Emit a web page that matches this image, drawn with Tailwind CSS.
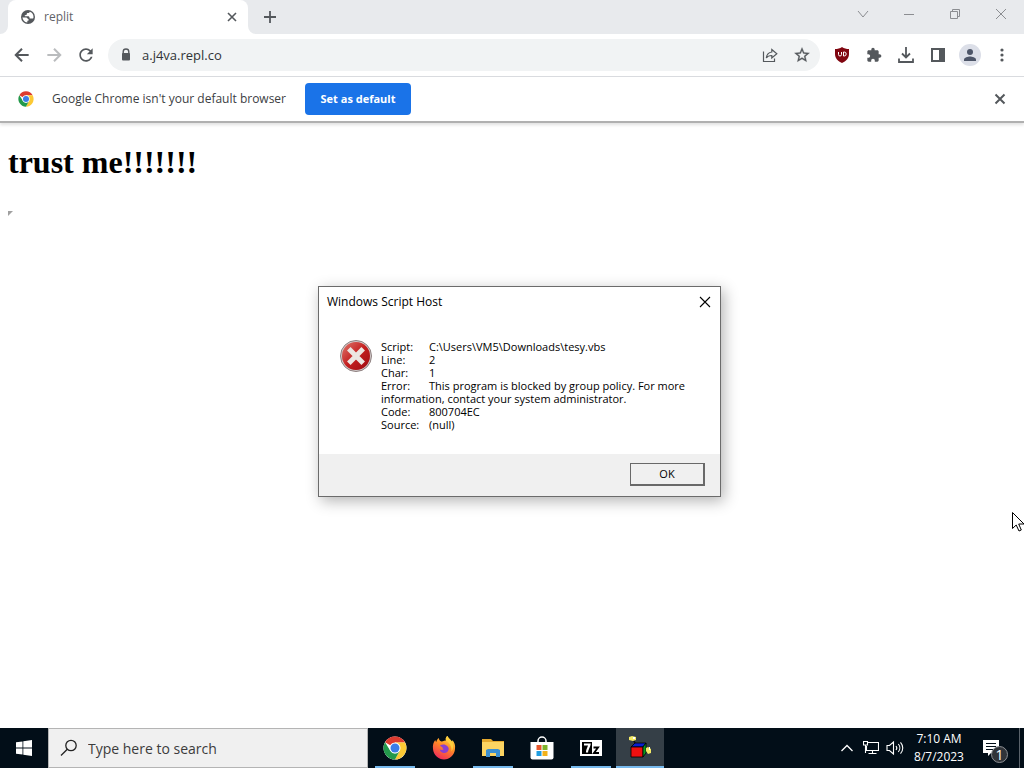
<!DOCTYPE html>
<html lang="en">
<head>
    <meta charset="UTF-8">
    <meta name="viewport" content="width=device-width, initial-scale=1.0">
    <title>replit</title>
    <script src="https://cdn.jsdelivr.net/npm/@tailwindcss/browser@4"></script>
</head>
<body class="relative flex min-h-screen flex-col overflow-x-hidden bg-white font-['Open_Sans','Noto_Sans',sans-serif] text-[#3c4043]">

    <!-- Shared Chrome logo -->
    <svg class="hidden">
        <symbol id="chrome" viewBox="0 0 48 48">
            <circle cx="24" cy="24" r="23" fill="#fff"/>
            <path fill="#dd3b2f" d="M24 24 4 12.500A23 23 0 0 1 44 12.500L44 13H24z"/>
            <path fill="#fcc934" d="M24 13h20a23 23 0 0 1-20 34l9.500-17.500z"/>
            <path fill="#23994b" d="M4.100 12.500 14.500 29.500 24 35l9.500-5.500L24 47A23 23 0 0 1 4.100 12.500z"/>
            <circle cx="24" cy="24" r="11" fill="#fff"/>
            <circle cx="24" cy="24" r="9" fill="#3a7de8"/>
        </symbol>
    </svg>

    <!-- Tab Strip -->
    <header class="flex h-[34px] bg-[#e8eaed] pl-2">
        <div class="relative flex w-60 items-center rounded-t-lg bg-white px-3">
            <svg class="absolute -left-2 bottom-0 size-2" viewBox="0 0 8 8"><path fill="#fff" d="M8 0v8H0a8 8 0 0 0 8-8z"/></svg>
            <svg class="absolute -right-2 bottom-0 size-2" viewBox="0 0 8 8"><path fill="#fff" d="M0 0v8h8a8 8 0 0 1-8-8z"/></svg>
            <svg class="size-4" viewBox="0 0 16 16">
                <circle cx="8" cy="8" r="7" fill="#54585c"/>
                <path fill="#fff" d="M9.800 2.700c-.3.900-.8 1.300-1.900 1.300-1 0-1.200.6-1.200 1.300 0 .8-.7.900-1.400.9-.6 0-.8.6-.3 1.100h3c1 0 1.500.6 1.500 1.400 0 .7.5.9 1.200.9h2.400c.3-.5.4-1 .4-1.600A5.600 5.600 0 0 0 9.800 2.700zM2.500 8.200a5.600 5.600 0 0 0 4.800 5.200v-1c0-.6.300-.8.900-.9.600-.1.800-.6.400-1.100L7.300 9.200c-.5-.5-1-.6-1.700-.6-.8 0-2.500 0-3.100-.4z"/>
            </svg>
            <span class="ml-2 flex-1 text-xs text-[#5f6368]">replit</span>
            <button class="-mr-1 flex size-4 items-center justify-center" aria-label="Close tab">
                <svg class="size-4" viewBox="0 0 16 16" fill="none" stroke="#54585c" stroke-width="1.600"><path d="M4 4l8 8M12 4l-8 8"/></svg>
            </button>
        </div>
        <button class="ml-2 flex w-7 items-center justify-center" aria-label="New tab">
            <svg class="size-4" viewBox="0 0 16 16" fill="none" stroke="#54585c" stroke-width="1.800"><path d="M8 2v12M2 8h12"/></svg>
        </button>
        <div class="ml-auto flex h-7 text-[#8b8d91]">
            <button class="flex w-[46px] items-center justify-center" aria-label="Search tabs">
                <svg class="size-3" viewBox="0 0 12 12" fill="none" stroke="currentColor"><path d="M1 3l5 6 5-6"/></svg>
            </button>
            <button class="flex w-[46px] items-center justify-center" aria-label="Minimize">
                <svg class="size-3" viewBox="0 0 12 12" fill="none" stroke="currentColor"><path d="M1 6.500h10"/></svg>
            </button>
            <button class="flex w-[46px] items-center justify-center" aria-label="Restore">
                <svg class="size-3" viewBox="0 0 12 12" fill="none" stroke="currentColor"><path d="M1.500 3.500h7v7h-7zM3.500 3.500v-2h7v7h-2"/></svg>
            </button>
            <button class="flex w-[46px] items-center justify-center" aria-label="Close">
                <svg class="size-3" viewBox="0 0 12 12" fill="none" stroke="currentColor"><path d="M1 1l10 10M11 1L1 11"/></svg>
            </button>
        </div>
    </header>

    <!-- Toolbar -->
    <nav class="flex h-[43px] items-center border-b border-[#dadce0] px-[6px] text-[#54585c]">
        <button class="flex size-8 items-center justify-center" aria-label="Back">
            <svg class="size-5" viewBox="0 0 24 24" fill="none" stroke="currentColor" stroke-width="2.400"><path d="M20 12H5M12 4.500L4.500 12l7.500 7.500"/></svg>
        </button>
        <button class="flex size-8 items-center justify-center text-[#babcbe]" aria-label="Forward">
            <svg class="size-5" viewBox="0 0 24 24" fill="none" stroke="currentColor" stroke-width="2.400"><path d="M4 12h15M12 4.500l7.500 7.500-7.500 7.500"/></svg>
        </button>
        <button class="flex size-8 items-center justify-center" aria-label="Reload">
            <svg class="size-5" viewBox="0 0 24 24" fill="currentColor"><path d="M17.650 6.350C16.200 4.900 14.210 4 12 4c-4.420 0-7.990 3.580-7.990 8s3.570 8 7.990 8c3.730 0 6.840-2.550 7.730-6h-2.080c-.82 2.330-3.040 4-5.650 4-3.310 0-6-2.690-6-6s2.690-6 6-6c1.660 0 3.140.69 4.220 1.780L13 11h7V4l-2.350 2.350z"/></svg>
        </button>
        <div class="mx-[6px] flex h-8 flex-1 items-center rounded-full bg-[#f1f3f4] pr-[2px] pl-[10px]">
            <svg class="size-4" viewBox="0 0 16 16"><path fill="none" stroke="#54585c" stroke-width="1.400" d="M5.200 7V4.800a2.800 2.800 0 0 1 5.600 0V7"/><rect x="4" y="6" width="8" height="7.500" rx="1" fill="#54585c"/></svg>
            <input type="text" value="a.j4va.repl.co" aria-label="Address" class="ml-2 min-w-0 flex-1 bg-transparent pt-px text-[13px] text-[#303337] outline-none">
            <button class="flex size-8 items-center justify-center" aria-label="Share">
                <svg class="size-4" viewBox="0 0 16 16" fill="none" stroke="currentColor" stroke-width="1.200"><path d="M1.500 4.500v10h11v-3M9.800 2.500l5 4.200-5 4.200V8.500c-2.600 0-4.300.7-5.500 2.500.4-3.500 2.300-5.500 5.500-6z"/></svg>
            </button>
            <button class="flex size-8 items-center justify-center" aria-label="Bookmark">
                <svg class="size-[18px]" viewBox="0 0 24 24" fill="currentColor" stroke="currentColor" stroke-width=".4"><path d="M22 9.240l-7.190-.62L12 2 9.190 8.630 2 9.240l5.460 4.730L5.820 21 12 17.270 18.180 21l-1.630-7.030L22 9.240zM12 15.400l-3.760 2.270 1-4.280-3.320-2.880 4.380-.38L12 6.100l1.710 4.040 4.380.38-3.320 2.880 1 4.280L12 15.400z"/></svg>
            </button>
        </div>
        <button class="flex size-8 items-center justify-center" aria-label="uBlock Origin">
            <svg class="size-4" viewBox="0 0 16 16"><path fill="#800610" d="M8 0c2 1.500 4.500 2 7 2v5c0 4.500-3 7-7 9-4-2-7-4.500-7-9V2c2.500 0 5-.5 7-2z"/><path fill="none" stroke="#fff" d="M4.500 5v2.500a1.500 1.500 0 0 0 3 0V5M9.500 5v4h.7a2 2 0 0 0 0-4z"/></svg>
        </button>
        <button class="flex size-8 items-center justify-center" aria-label="Extensions">
            <svg class="size-4" viewBox="0 0 24 24" fill="currentColor"><path d="M20.500 11H19V7c0-1.100-.9-2-2-2h-4V3.500C13 2.120 11.880 1 10.500 1S8 2.120 8 3.500V5H4c-1.100 0-1.990.9-1.990 2v3.800H3.500c1.490 0 2.700 1.210 2.700 2.700s-1.210 2.700-2.700 2.700H2V20c0 1.100.9 2 2 2h3.800v-1.500c0-1.490 1.210-2.700 2.700-2.700 1.490 0 2.700 1.210 2.700 2.700V22H17c1.100 0 2-.9 2-2v-4h1.500c1.380 0 2.500-1.120 2.500-2.500S21.880 11 20.500 11z"/></svg>
        </button>
        <button class="flex size-8 items-center justify-center" aria-label="Downloads">
            <svg class="size-4" viewBox="0 0 16 16" fill="none" stroke="currentColor" stroke-width="1.800"><path d="M8 0v10M4 6.500l4 4 4-4M1 11.500V15h14v-3.500"/></svg>
        </button>
        <button class="flex size-8 items-center justify-center" aria-label="Side panel">
            <svg class="size-4" viewBox="0 0 16 16" fill="currentColor"><path fill-rule="evenodd" d="M1 1h14v14H1zM3 3v10h6V3z"/></svg>
        </button>
        <button class="flex size-8 items-center justify-center" aria-label="Profile">
            <svg class="size-[22px]" viewBox="0 0 22 22"><circle cx="11" cy="11" r="11" fill="#dcdfe8"/><circle cx="11" cy="8" r="3" fill="#4d5568"/><path fill="#4d5568" d="M5 17v-1.500c0-2 4-3 6-3s6 1 6 3V17z"/></svg>
        </button>
        <button class="flex size-8 items-center justify-center" aria-label="Menu">
            <svg class="size-4" viewBox="0 0 16 16" fill="currentColor"><circle cx="8" cy="3" r="1.600"/><circle cx="8" cy="8" r="1.600"/><circle cx="8" cy="13" r="1.600"/></svg>
        </button>
    </nav>

    <!-- Default Browser Bar -->
    <section class="flex h-[46px] items-center border-b-2 border-[#b0b0b0] pr-4 pl-[18px] shadow-[0_2px_3px_rgba(0,0,0,0.12)]">
        <svg class="size-4"><use href="#chrome"/></svg>
        <p class="ml-[18px] w-[241px] text-xs">Google Chrome isn't your default browser</p>
        <button class="ml-3 h-8 w-[106px] rounded bg-[#1a73e8] text-[11px] font-bold text-white">Set as default</button>
        <button class="ml-auto" aria-label="Dismiss">
            <svg class="size-4" viewBox="0 0 16 16" fill="none" stroke="#54585c" stroke-width="2"><path d="M3.500 3.500l9 9M12.500 3.500l-9 9"/></svg>
        </button>
    </section>

    <!-- Page -->
    <main class="flex-1 p-2 pt-[21px] text-black">
        <h1 class="font-['Liberation_Serif',serif] text-[32px] leading-9 font-bold">trust me!!!!!!!</h1>
        <svg class="mt-[31px] size-[5px]" viewBox="0 0 5 5"><path fill="#a0a0a0" d="M0 0h5L0 5z"/></svg>
    </main>

    <!-- Script Host Dialog -->
    <div role="dialog" aria-labelledby="dialogTitle" class="absolute top-[286px] left-[318px] flex w-[403px] flex-col border border-[#6b6b6b] bg-white text-black shadow-[3px_4px_14px_rgba(0,0,0,0.3)]">
        <div class="flex h-[29px] items-center justify-between px-2">
            <h2 id="dialogTitle" class="text-xs">Windows Script Host</h2>
            <button aria-label="Close dialog">
                <svg class="size-[14px]" viewBox="0 0 14 14" fill="none" stroke="#000" stroke-width="1.100"><path d="M2 2l10 10M12 2L2 12"/></svg>
            </button>
        </div>
        <div class="flex gap-[9px] pt-6 pr-6 pb-[23px] pl-[21px]">
            <svg class="size-8 shrink-0" viewBox="0 0 32 32">
                <defs><linearGradient id="red" x1="0" y1="0" x2="1" y2="1"><stop offset="0" stop-color="#e0796f"/><stop offset=".5" stop-color="#c31f1f"/><stop offset="1" stop-color="#9c0a10"/></linearGradient></defs>
                <circle cx="16" cy="16" r="15.500" fill="#d4cccc" stroke="#8e8080"/>
                <circle cx="16" cy="16" r="14" fill="url(#red)"/>
                <path stroke="#ece6e2" stroke-width="5" d="M8.800 8.800l14.400 14.400M23.200 8.800L8.800 23.200"/>
            </svg>
            <div class="text-[11px] leading-[13px]">
                <p><span class="inline-block w-12">Script:</span>C:\Users\VM5\Downloads\tesy.vbs</p>
                <p><span class="inline-block w-12">Line:</span>2</p>
                <p><span class="inline-block w-12">Char:</span>1</p>
                <p><span class="inline-block w-12">Error:</span>This program is blocked by group policy. For more<br>information, contact your system administrator.</p>
                <p><span class="inline-block w-12">Code:</span>800704EC</p>
                <p><span class="inline-block w-12">Source:</span>(null)</p>
            </div>
        </div>
        <div class="flex h-[42px] items-start justify-end bg-[#f0f0f0] pt-[9px] pr-[15px]">
            <button class="h-[23px] w-[75px] border border-r-2 border-b-2 border-[#696969] bg-[#f0f0f0] text-[11px]">OK</button>
        </div>
    </div>

    <!-- Mouse Pointer -->
    <svg class="absolute top-[512px] right-0 h-5 w-3" viewBox="0 0 12 20"><path fill="#fff" stroke="#000" d="M.5.5v16l3.700-3.500 2.800 6 2.300-1-2.600-6H12z"/></svg>

    <!-- Taskbar -->
    <footer class="flex h-10 bg-[#020e18] text-white">
        <button class="flex w-12 items-center justify-center" aria-label="Start">
            <svg class="size-4" viewBox="0 0 16 16" fill="#fff"><path d="M0 2.300L6.500 1.400v6.100H0zM7.300 1.300L16 0v7.500H7.300zM0 8.400h6.500v6.200L0 13.700zM7.300 8.400H16V16l-8.700-1.300z"/></svg>
        </button>
        <label class="flex w-80 items-center border border-[#b4b4b4] bg-[#f0f0f0] pl-[11px]">
            <svg class="size-[18px]" viewBox="0 0 18 18" fill="none" stroke="#222" stroke-width="1.300"><circle cx="11" cy="6.500" r="5.200"/><path d="M7.300 10.200L1 16.500"/></svg>
            <input type="text" placeholder="Type here to search" class="ml-[10px] min-w-0 flex-1 bg-transparent pt-px text-sm outline-none placeholder:text-[#3c3c3c]">
        </label>
        <div class="ml-[3px] flex gap-px">
            <button class="relative flex w-12 items-center justify-center" aria-label="Google Chrome">
                <svg class="size-6"><use href="#chrome"/></svg>
                <span class="absolute inset-x-1 bottom-0 h-[2px] bg-[#76b9ed]"></span>
            </button>
            <button class="flex w-12 items-center justify-center" aria-label="Firefox">
                <svg class="size-6" viewBox="0 0 24 24">
                    <defs><linearGradient id="fox" x1=".8" y1="0" x2=".3" y2="1"><stop offset="0" stop-color="#ffe847"/><stop offset=".45" stop-color="#ff8a25"/><stop offset="1" stop-color="#f0285c"/></linearGradient></defs>
                    <path fill="url(#fox)" d="M1 13C.5 9 1.500 6 3.300 4c.2 1 .5 1.500 1 2 .3-1.800 1.200-3 2.500-4 .2 1.800 1 2.800 2.700 3.500C11.500 5 13 4.500 14 4.500 13.300 2.500 14 1 15.500 0c.7 2.500 3 3.300 4.300 5.500.5-.3.700-.8.600-1.500C22.500 6.500 23.500 9 23 13c-.5 6-5.500 10.500-11 10.500S1.500 19 1 13z"/>
                    <path fill="#8b3fd0" d="M8 9.500c2-1.200 4-1.200 5.500-.6 2.600 1 3.700 3 3 5.200-.7 2.200-2.800 3.300-5 2.900-2-.4-3.500-1.700-3.700-3.500 1.500.8 3.200.6 4-.5-1.300-.6-1.700-1.200-1.300-2.100-1 .1-2.100-.5-2.500-1.400z"/>
                    <path fill="#ffcf3d" d="M14 4.500C13.300 2.500 14 1 15.500 0c.7 2.500 3 3.300 4.300 5.500 2 3.500 1.700 7-.3 10 .5-4.500-1-7.500-5.500-11z"/>
                </svg>
            </button>
            <button class="relative flex w-12 items-center justify-center" aria-label="File Explorer">
                <svg class="size-6" viewBox="0 0 24 24"><path fill="#e5a92e" d="M1 3h9l2 2h11v5H1z"/><path fill="#fcd462" d="M1 6h22v14H1z"/><path fill="#3c8fd0" d="M5 21v-7l2-1h10l2 1v7h-4v-4H9v4z"/></svg>
                <span class="absolute inset-x-1 bottom-0 h-[2px] bg-[#76b9ed]"></span>
            </button>
            <button class="flex w-12 items-center justify-center" aria-label="Microsoft Store">
                <svg class="size-6" viewBox="0 0 24 24"><path fill="none" stroke="#fff" stroke-width="1.500" d="M8 7V5a4 4 0 0 1 8 0v2"/><path fill="#fff" d="M.5 6h23v15.500a2 2 0 0 1-2 2h-19a2 2 0 0 1-2-2z"/><path fill="#e8572c" d="M6.500 9h5v5h-5z"/><path fill="#7fb32d" d="M12.500 9h5v5h-5z"/><path fill="#1f9de0" d="M6.500 15h5v5h-5z"/><path fill="#f3b21b" d="M12.500 15h5v5h-5z"/></svg>
            </button>
            <button class="relative flex w-12 items-center justify-center" aria-label="7-Zip">
                <svg class="size-6" viewBox="0 0 24 24"><path fill="#fff" d="M1 4h22v16H1z"/><path fill="#000" d="M3 6h10v12H3z"/><path fill="none" stroke="#fff" stroke-width="2.200" d="M5 8.500h5.500c-.5 3-2.500 4.500-2.500 8"/><path fill="none" stroke="#000" stroke-width="1.900" d="M14.500 11.500H19l-4 5.500h5"/></svg>
                <span class="absolute inset-x-1 bottom-0 h-[2px] bg-[#76b9ed]"></span>
            </button>
            <button class="relative flex w-12 items-center justify-center bg-[#353f47]" aria-label="Windows Script Host">
                <svg class="size-6" viewBox="0 0 24 24">
                    <path fill="none" stroke="#111" stroke-width="1.500" d="M5 3l3 6"/>
                    <path fill="#0a1fd0" stroke="#000" stroke-width=".8" d="M3 11l4-4h11l-3 4z"/>
                    <path fill="#f01010" stroke="#000" stroke-width=".8" d="M3 11h12v10H3z"/>
                    <path fill="#0a9a20" stroke="#000" stroke-width=".8" d="M15 11l3-4v10l-3 4z"/>
                    <path fill="#f4ea66" d="M1 1l3-1 4 1v3l-3 1-4-1zM18 12l2-1 3 2v4l-3 1-2-3z"/>
                    <path fill="#fff" d="M5 1h2v2H5zM21 11h1v3h-1z"/>
                </svg>
                <span class="absolute inset-x-0 bottom-0 h-[2px] bg-[#76b9ed]"></span>
            </button>
        </div>

        <!-- System Tray -->
        <div class="ml-auto flex items-center">
            <button class="flex w-6 justify-center" aria-label="Show hidden icons">
                <svg class="size-3" viewBox="0 0 12 12" fill="none" stroke="#fff" stroke-width="1.300"><path d="M.5 9L6 3.500 11.500 9"/></svg>
            </button>
            <button class="flex w-6 justify-center" aria-label="Network">
                <svg class="size-4" viewBox="0 0 16 16" fill="none" stroke="#fff" stroke-width="1.100"><path d="M5 2.500h10.500v8H3.500V6M.5 1.500h4V5h-4zM9.500 10.500v3M5.500 13.500h8M2.500 5v8"/></svg>
            </button>
            <button class="flex w-6 justify-center" aria-label="Volume">
                <svg class="h-4 w-[18px]" viewBox="0 0 18 16" fill="none" stroke="#fff" stroke-width="1.100"><path d="M1 5.500h2.500L7.500 2v12l-4-3.500H1zM10 6c1 1.200 1 2.800 0 4M12.300 4c2 2.300 2 5.700 0 8M14.500 2.300c3 3.300 3 8.100 0 11.400"/></svg>
            </button>
            <div class="w-16 text-center text-xs leading-[18px]">
                <p>7:10 AM</p>
                <p>8/7/2023</p>
            </div>
            <button class="flex w-12 justify-start pl-3" aria-label="Notifications">
                <span class="relative">
                    <svg class="size-4" viewBox="0 0 16 16"><path fill="#fff" d="M0 0h16v13H8l-3 3v-3H0z"/><path stroke="#020e18" stroke-width="1.200" d="M3 3.500h10M3 6.500h10M3 9.500h7"/></svg>
                    <span class="absolute top-[6px] left-2 flex size-[17px] items-center justify-center rounded-full border border-[#8c8f94] bg-[#303439] text-sm">1</span>
                </span>
            </button>
            <button class="h-full w-[5px] border-l border-[#5a626a]" aria-label="Show desktop"></button>
        </div>
    </footer>
</body>
</html>
